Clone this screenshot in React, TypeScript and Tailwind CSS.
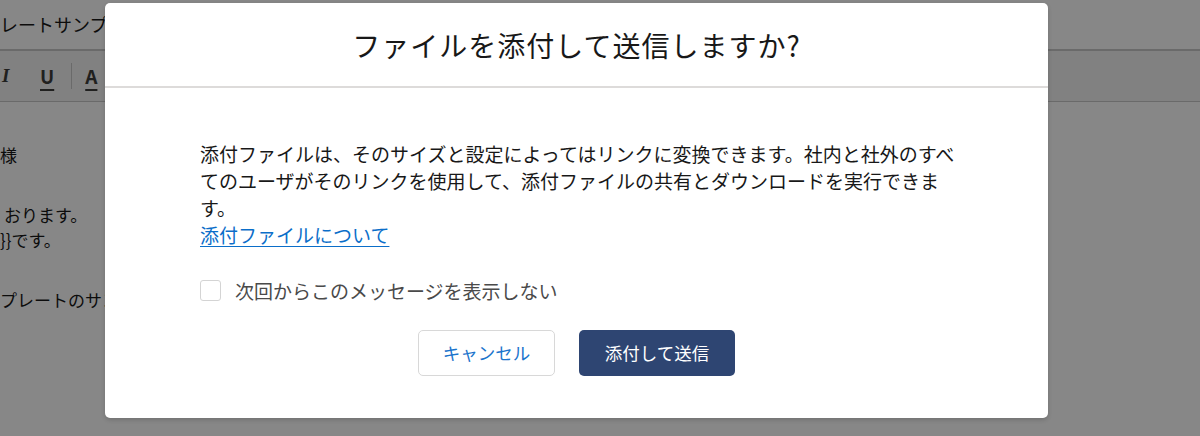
const jp = '"Noto Sans CJK JP", "Noto Sans", sans-serif';

function BackgroundEditor() {
  return (
    <div className="flex h-full flex-col bg-white text-[#181818]" style={{ fontFamily: jp }}>
      <div className="flex h-[50px] items-center border-b border-[#c9c9c9] text-[18px]">
        レートサンプル
      </div>
      <div className="flex h-[52px] items-center border-y border-[#c9c9c9] bg-[#f3f3f3] text-[19px] font-bold text-[#3e3e3c]">
        <span className="w-[14px] pl-[2px] italic" style={{ fontFamily: '"Liberation Serif", serif' }}>I</span>
        <span className="ml-[26px] underline decoration-2 underline-offset-[5px]">U</span>
        <span className="ml-[17px] h-[26px] w-px bg-[#c9c9c9]" />
        <span className="ml-[13px] underline decoration-2 underline-offset-[5px]">A</span>
      </div>
      <div className="flex flex-col pt-[40px] text-[17px] leading-[25px]">
        <div>様</div>
        <div className="h-[35px]" />
        <div className="pl-[4px]">おります。</div>
        <div>{'}}です。'}</div>
        <div className="h-[35px]" />
        <div>プレートのサンプル</div>
      </div>
    </div>
  );
}

export default function App() {
  return (
    <div className="relative h-[436px] w-[1200px] overflow-hidden">
      <BackgroundEditor />
      <div className="absolute inset-0 bg-black/[0.47]" />
      <div
        role="dialog"
        className="absolute left-[105px] top-[3px] flex h-[415px] w-[943px] flex-col rounded-[5px] bg-white text-[#181818] shadow-[0_2px_4px_rgba(0,0,0,0.16)]"
        style={{ fontFamily: jp }}
      >
        <div className="flex h-[85px] items-center justify-center border-b-2 border-[#dddbda] text-[28px] tracking-[1px]">
          ファイルを添付して送信しますか?
        </div>
        <div className="flex flex-1 flex-col pl-[95px] pt-[52px]">
          <p className="w-[770px] text-[19px] leading-[27px]">
            添付ファイルは、そのサイズと設定によってはリンクに変換できます。社内と社外のすべてのユーザがそのリンクを使用して、添付ファイルの共有とダウンロードを実行できます。
          </p>
          <a href="#" className="self-start text-[19px] leading-[27px] text-[#0b6ec9] underline underline-offset-[3px]">
            添付ファイルについて
          </a>
          <label className="mt-[29px] flex items-center gap-[14px] text-[19px] leading-[27px] text-[#4a4a4a]">
            <span className="h-[21px] w-[21px] rounded-[3px] border border-[#d4d4d4] bg-white" />
            次回からこのメッセージを表示しない
          </label>
        </div>
        <div className="flex justify-center gap-[24px] pb-[42px]">
          <button className="h-[46px] w-[137px] rounded-[5px] border border-[#d8d8d8] bg-white text-[17.5px] text-[#1b74cc]">
            キャンセル
          </button>
          <button className="h-[46px] w-[156px] rounded-[5px] bg-[#2e4572] text-[17.5px] text-white">
            添付して送信
          </button>
        </div>
      </div>
    </div>
  );
}
